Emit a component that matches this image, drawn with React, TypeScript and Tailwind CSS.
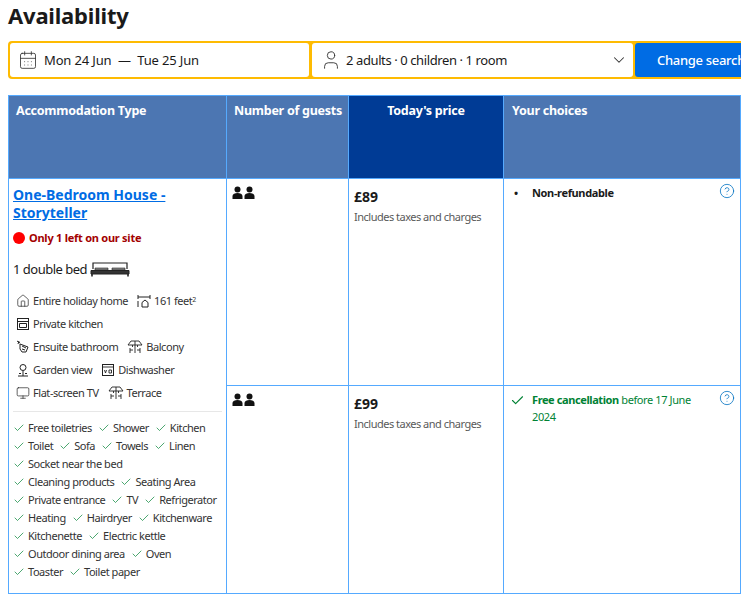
import { CalendarDays, Check, ChevronDown, CircleHelp, House, Monitor, User } from "lucide-react";
import type { ReactNode } from "react";

const font = { fontFamily: '"Noto Sans", sans-serif' };

const PairOfGuests = () => (
  <svg width="24" height="14" viewBox="0 0 24 14" fill="#111">
    <circle cx="5.500" cy="3.500" r="3" />
    <path d="M0.500 13v-3C0.500 8 3 7 5.500 7s5 1 5 3v3z" />
    <circle cx="17.500" cy="3.500" r="3" />
    <path d="M12.500 13v-3c0-2 2.500-3 5-3s5 1 5 3v3z" />
  </svg>
);

const BedIcon = () => (
  <svg width="40" height="16" viewBox="0 0 40 16" fill="none" stroke="#222">
    <path d="M3 8V2h34v6" strokeWidth="1.2" />
    <path d="M1 9.500h38v3.500H1z" fill="#333" stroke="#222" />
    <path d="M5 7h13v2H5zM22 7h13v2H22z" fill="#888" strokeWidth="0.6" />
    <path d="M2 13v2.500M38 13v2.500" strokeWidth="1.6" />
  </svg>
);

const Size = () => (
  <svg width="14" height="14" viewBox="0 0 14 14" fill="none" stroke="#222">
    <path d="M1 1v4M13 1v4M1 3h12M5 13V8.500l3-2.500 3 2.500V13zM1 7v6" strokeWidth="1" />
  </svg>
);

const Kitchen = () => (
  <svg width="14" height="14" viewBox="0 0 14 14" fill="none" stroke="#222">
    <rect x="1.500" y="1.500" width="11" height="11" strokeWidth="1" />
    <path d="M1.500 4.500h11M3.500 6.500h7v4h-7z" strokeWidth="1" />
  </svg>
);

const Bath = () => (
  <svg width="14" height="14" viewBox="0 0 14 14" fill="none" stroke="#222">
    <path d="M1 1l3 2M3 1l-1 3M4 4l8 3-2 5H6L4 9z" strokeWidth="1" />
    <path d="M6 6l4 2M6 9l3 1" strokeWidth="1" />
  </svg>
);

const Terrace = () => (
  <svg width="16" height="14" viewBox="0 0 16 14" fill="none" stroke="#222">
    <path d="M1 5l3-4h8l3 4zM8 1v12M3 8v5M13 8v5M3 10h3M10 10h3M5.500 5v2M10.500 5v2" strokeWidth="0.9" />
  </svg>
);

const Garden = () => (
  <svg width="14" height="14" viewBox="0 0 14 14" fill="none" stroke="#222">
    <circle cx="7" cy="4.500" r="3" strokeWidth="1" />
    <path d="M7 8v5M2 13h10M3 10.500h2M9 10.500h2" strokeWidth="1" />
  </svg>
);

const Dishwasher = () => (
  <svg width="14" height="14" viewBox="0 0 14 14" fill="none" stroke="#222">
    <rect x="1.500" y="1.500" width="11" height="11" strokeWidth="1" />
    <path d="M1.500 4h11M3.500 7l1 3 1-3M8 7h2.500v3H8z" strokeWidth="0.9" />
  </svg>
);

const Facility = ({ icon, label }: { icon: ReactNode; label: ReactNode }) => (
  <span className="flex items-center gap-[3px] whitespace-nowrap">
    {icon}
    <span>{label}</span>
  </span>
);

const homeIcon = <House size={14} strokeWidth={1.2} color="#222" />;
const tvIcon = <Monitor size={14} strokeWidth={1.2} color="#222" />;

const facilities: ReactNode[][] = [
  [
    <Facility key="a" icon={homeIcon} label="Entire holiday home" />,
    <Facility
      key="b"
      icon={<Size />}
      label={
        <>
          161 feet<sup className="text-[7px]">2</sup>
        </>
      }
    />,
  ],
  [<Facility key="a" icon={<Kitchen />} label="Private kitchen" />],
  [
    <Facility key="a" icon={<Bath />} label="Ensuite bathroom" />,
    <Facility key="b" icon={<Terrace />} label="Balcony" />,
  ],
  [
    <Facility key="a" icon={<Garden />} label="Garden view" />,
    <Facility key="b" icon={<Dishwasher />} label="Dishwasher" />,
  ],
  [
    <Facility key="a" icon={tvIcon} label="Flat-screen TV" />,
    <Facility key="b" icon={<Terrace />} label="Terrace" />,
  ],
];

const perks = [
  ["Free toiletries", "Shower", "Kitchen"],
  ["Toilet", "Sofa", "Towels", "Linen"],
  ["Socket near the bed"],
  ["Cleaning products", "Seating Area"],
  ["Private entrance", "TV", "Refrigerator"],
  ["Heating", "Hairdryer", "Kitchenware"],
  ["Kitchenette", "Electric kettle"],
  ["Outdoor dining area", "Oven"],
  ["Toaster", "Toilet paper"],
];

const Help = () => (
  <CircleHelp size={16} strokeWidth={1.2} color="#0071c2" className="shrink-0" />
);

const Price = ({ amount }: { amount: string }) => (
  <>
    <div className="text-[14px] font-bold leading-[20px] text-[#1a1a1a]">{amount}</div>
    <div className="mt-[1px] text-[11px] leading-[18px] tracking-[-0.5px] text-[#595959]">
      Includes taxes and charges
    </div>
  </>
);

const thBase =
  "border border-[#55aaff] align-top pr-[7px] pt-[6px] text-[12.5px] font-bold leading-[18px] tracking-[-0.25px] text-white whitespace-nowrap";
const tdBase = "border border-[#55aaff] align-top";

export default function App() {
  return (
    <div className="h-[594px] w-[741px] overflow-hidden bg-white pl-[8px] text-[#1a1a1a]" style={font}>
      <h2 className="text-[22px] font-bold leading-[30px] tracking-[-0.2px]">Availability</h2>

      <div className="mt-[11px] flex h-[38px] w-[760px] rounded-[4px] bg-[#febb02] p-[2px] text-[13px]">
        <div className="flex w-[299px] items-center gap-[6px] rounded-[3px] bg-white pl-[8px] tracking-[-0.15px]">
          <CalendarDays size={20} strokeWidth={1} color="#333" />
          <span className="pt-[2px]">Mon 24 Jun&nbsp; — &nbsp;Tue 25 Jun</span>
        </div>
        <div className="ml-[3px] flex w-[321px] items-center rounded-[3px] bg-white pl-[8px] pr-[5px] tracking-[-0.4px]">
          <User size={22} strokeWidth={1} color="#333" />
          <span className="ml-[4px] flex-1 pt-[2px]">2 adults · 0 children · 1 room</span>
          <ChevronDown size={18} strokeWidth={1.4} color="#333" />
        </div>
        <div className="ml-[2px] flex flex-1 items-center rounded-[3px] bg-[#006ce4] pl-[22px] pt-[2px] font-medium tracking-[-0.3px] text-white">
          Change search
        </div>
      </div>

      <table className="mt-[16px] w-[732px] table-fixed border-collapse">
        <colgroup>
          <col className="w-[218px]" />
          <col className="w-[122px]" />
          <col className="w-[155px]" />
          <col className="w-[237px]" />
        </colgroup>
        <thead>
          <tr className="h-[83px]">
            <th className={`${thBase} bg-[#4c76b2] pl-[7px] text-left`}>Accommodation Type</th>
            <th className={`${thBase} bg-[#4c76b2] pl-[7px] text-left`}>Number of guests</th>
            <th className={`${thBase} bg-[#003b95] pl-[7px] text-center`}>Today's price</th>
            <th className={`${thBase} bg-[#4c76b2] pl-[8px] text-left`}>Your choices</th>
          </tr>
        </thead>
        <tbody>
          <tr className="h-[207px]">
            <td rowSpan={2} className={`${tdBase} px-[4px] pt-[7px]`}>
              <a className="block text-[14px] font-bold leading-[18px] text-[#006ce4] underline">
                One-Bedroom House - Storyteller
              </a>
              <div className="mt-[8px] flex items-center gap-[4px] text-[11px] font-bold leading-[16px] tracking-[-0.25px] text-[#a30000]">
                <span className="h-[12px] w-[12px] rounded-full bg-[#ff0000]" />
                Only 1 left on our site
              </div>
              <div className="mt-[13px] flex items-center gap-[3px] text-[13px] leading-[20px] tracking-[-0.5px]">
                1 double bed <BedIcon />
              </div>
              <div className="mt-[13px] flex flex-col gap-[5px] pl-[3px] text-[11px] leading-[18px] tracking-[-0.45px] text-[#333]">
                {facilities.map((row, i) => (
                  <div key={i} className="flex gap-[9px]">
                    {row}
                  </div>
                ))}
              </div>
              <div className="mt-[9px] border-t border-[#e7e7e7] pt-[7px] text-[11px] leading-[18px] tracking-[-0.45px] text-[#333]">
                {perks.map((row, i) => (
                  <div key={i} className="flex gap-[6px]">
                    {row.map((p) => (
                      <span key={p} className="flex items-center gap-[3px] whitespace-nowrap">
                        <Check size={12} strokeWidth={1.4} color="#008234" />
                        {p}
                      </span>
                    ))}
                  </div>
                ))}
              </div>
            </td>
            <td className={`${tdBase} px-[5px] pt-[7px]`}>
              <PairOfGuests />
            </td>
            <td className={`${tdBase} px-[5px] pt-[8px]`}>
              <Price amount="£89" />
            </td>
            <td className={`${tdBase} pl-[8px] pr-[5px] pt-[4px]`}>
              <div className="flex items-start justify-between">
                <div className="mt-[1px] flex text-[11px] font-bold leading-[18px] tracking-[-0.35px]">
                  <span className="w-[20px] pl-[2px]">•</span>
                  Non-refundable
                </div>
                <Help />
              </div>
            </td>
          </tr>
          <tr className="h-[208px]">
            <td className={`${tdBase} px-[5px] pt-[7px]`}>
              <PairOfGuests />
            </td>
            <td className={`${tdBase} px-[5px] pt-[8px]`}>
              <Price amount="£99" />
            </td>
            <td className={`${tdBase} pl-[6px] pr-[5px] pt-[4px]`}>
              <div className="flex items-start justify-between">
                <div className="mt-[1px] flex text-[11px] leading-[17px] tracking-[-0.4px] text-[#008234]">
                  <Check size={15} strokeWidth={1.8} color="#008234" className="mr-[7px] mt-[2px] shrink-0" />
                  <span className="w-[180px]">
                    <b>Free cancellation</b> before 17 June 2024
                  </span>
                </div>
                <Help />
              </div>
            </td>
          </tr>
        </tbody>
      </table>
    </div>
  );
}
